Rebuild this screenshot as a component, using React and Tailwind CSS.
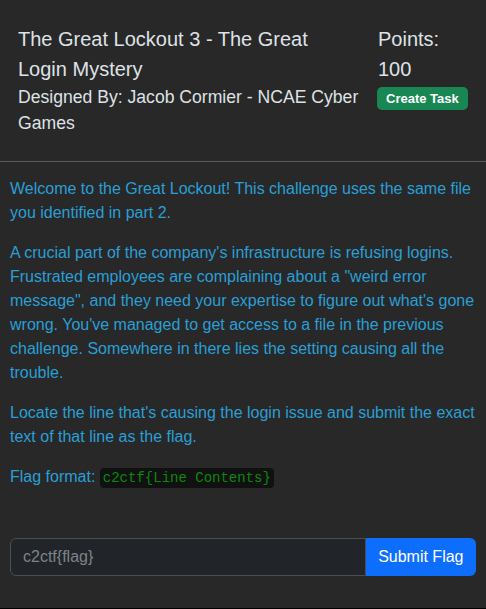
export default function App() {
  return (
    <div className="h-[609px] bg-black">
      <div className="h-[608px] bg-[#282828] font-['Liberation_Sans',Arial,sans-serif]">
        <div className="flex border-b border-[#5a5a5a] px-[18px] pt-[24px] pb-[24px] text-[#dee2e6]">
          <div className="w-[342px]">
            <div className="text-[20px] leading-[30px]">The Great Lockout 3 - The Great Login Mystery</div>
            <div className="text-[17.6px] leading-[26.4px]">Designed By: Jacob Cormier - NCAE Cyber Games</div>
          </div>
          <div className="ml-[18px] flex flex-col items-start">
            <div className="text-[20px] leading-[30px]">Points:</div>
            <div className="text-[20px] leading-[30px]">100</div>
            <button className="ml-[-1px] mt-[3px] rounded-[5px] bg-[#198754] px-[9px] py-[4px] text-[13px] font-bold leading-[15px] text-white">
              Create Task
            </button>
          </div>
        </div>
        <div className="px-[10px] pt-[15px] text-[16px] leading-[24px] text-[#2a9fd6]">
          <p className="mb-[16px]">Welcome to the Great Lockout! This challenge uses the same file you identified in part 2.</p>
          <p className="mb-[16px]">
            A crucial part of the company's infrastructure is refusing logins. Frustrated employees are complaining about a "weird error message", and they need your expertise to figure out what's gone wrong. You've managed to get access to a file in the previous challenge. Somewhere in there lies the setting causing all the trouble.
          </p>
          <p className="mb-[16px]">Locate the line that's causing the login issue and submit the exact text of that line as the flag.</p>
          <p className="mb-[16px]">
            Flag format:{" "}
            <code className="rounded-[4px] bg-[#111111] px-[3px] py-[2px] font-['Liberation_Mono',monospace] text-[14px] text-[#0a8a0a]">
              c2ctf{"{"}Line Contents{"}"}
            </code>
          </p>
          <div className="mt-[48px] flex h-[38px]">
            <input
              className="h-full min-w-0 flex-1 rounded-l-[6px] border border-[#4a4f55] bg-[#212529] px-[12px] text-[16px] text-[#dee2e6] outline-none placeholder:text-[#7f8387]"
              placeholder="c2ctf{flag}"
            />
            <button className="h-full rounded-r-[6px] bg-[#0d6efd] px-[12.5px] text-[16px] text-white">Submit Flag</button>
          </div>
        </div>
      </div>
    </div>
  );
}
